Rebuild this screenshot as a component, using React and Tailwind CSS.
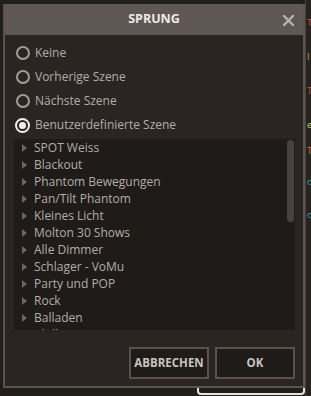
import { useState } from 'react';

const options = ['Keine', 'Vorherige Szene', 'Nächste Szene', 'Benutzerdefinierte Szene'];

const scenes = [
  'SPOT Weiss',
  'Blackout',
  'Phantom Bewegungen',
  'Pan/Tilt Phantom',
  'Kleines Licht',
  'Molton 30 Shows',
  'Alle Dimmer',
  'Schlager - VoMu',
  'Party und POP',
  'Rock',
  'Balladen',
  'Chill',
];

function Radio({ checked }) {
  return checked ? (
    <span className="flex h-[15px] w-[15px] items-center justify-center rounded-full border-2 border-[#f2efec]">
      <span className="h-[7px] w-[7px] rounded-full bg-[#f2efec]" />
    </span>
  ) : (
    <span className="h-[14px] w-[14px] rounded-full border-2 border-[#a39c98]" />
  );
}

export default function App() {
  const [selected, setSelected] = useState(3);

  return (
    <div className="relative h-[396px] w-[311px] overflow-hidden bg-[#221e1c] pl-[3px] pt-[4px] font-['Open_Sans',sans-serif]">
      {/* app behind the dialog */}
      <div className="absolute right-0 top-0 h-full w-[6px] border-l border-[#4a4441] bg-[#262220]">
        <span className="absolute left-[1px] top-[18px] text-[9px] leading-none text-[#d9473a]">T</span>
        <span className="absolute left-[1px] top-[52px] text-[9px] leading-none text-[#d8a040]">I</span>
        <span className="absolute left-[1px] top-[86px] text-[9px] leading-none text-[#d9473a]">T</span>
        <span className="absolute left-[1px] top-[120px] text-[9px] leading-none text-[#b8d060]">e</span>
        <span className="absolute left-[1px] top-[146px] text-[9px] leading-none text-[#d8702a]">T</span>
        <span className="absolute left-[1px] top-[177px] text-[9px] leading-none text-[#3aa6a0]">o</span>
        <span className="absolute left-[1px] top-[210px] text-[9px] leading-none text-[#3aa6a0]">o</span>
      </div>
      <div className="absolute bottom-[1px] left-[197px] h-[18px] w-[108px] rounded-[4px] border-2 border-[#e8e4e0]" />

      <div className="relative flex h-[384px] w-[302px] flex-col border-2 border-t-0 border-[#5a524f] bg-[#2a2522]">
        <div className="relative flex h-[31px] shrink-0 items-center justify-center bg-[#5f5754]">
          <span className="text-[12.5px] font-bold text-[#efeae6]">SPRUNG</span>
          <svg className="absolute right-[9px] top-[11px]" width="11" height="11" viewBox="0 0 11 11">
            <path d="M1 1L10 10M10 1L1 10" stroke="#b9b2ae" strokeWidth="2.4" strokeLinecap="round" />
          </svg>
        </div>

        <div className="flex flex-col gap-[6px] pl-[10px] pt-[9px]">
          {options.map((o, i) => (
            <button
              key={o}
              onClick={() => setSelected(i)}
              className="flex h-[18px] items-center gap-[5px] text-left"
            >
              <span className="flex w-[15px] justify-center">
                <Radio checked={selected === i} />
              </span>
              <span className="text-[12px] text-[#b3ada9]">{o}</span>
            </button>
          ))}
        </div>

        <div className="relative ml-[9px] mr-[8px] mt-[5px] h-[191px] overflow-hidden bg-[#1f1b19]">
          {scenes.map((s) => (
            <div key={s} className="flex h-[17px] items-center">
              <span className="ml-[8px] mr-[7px] h-0 w-0 border-y-[4px] border-l-[5px] border-y-transparent border-l-[#6c6562]" />
              <span className="text-[12px] text-[#b3ada9]">{s}</span>
            </div>
          ))}
          <div className="absolute right-[1px] top-[1px] h-[82px] w-[7px] rounded-full bg-[#48423f]" />
        </div>

        <div className="mr-[8px] mt-auto mb-[7px] flex justify-end gap-[6px]">
          <button className="flex h-[32px] w-[80px] items-center justify-center border-2 border-[#5a524f] bg-[#1f1b19] text-[11.5px] font-bold text-[#c9c3bf]">
            ABBRECHEN
          </button>
          <button className="flex h-[32px] w-[80px] items-center justify-center border-2 border-[#5a524f] bg-[#1f1b19] text-[11.5px] font-bold text-[#c9c3bf]">
            OK
          </button>
        </div>
      </div>
    </div>
  );
}
